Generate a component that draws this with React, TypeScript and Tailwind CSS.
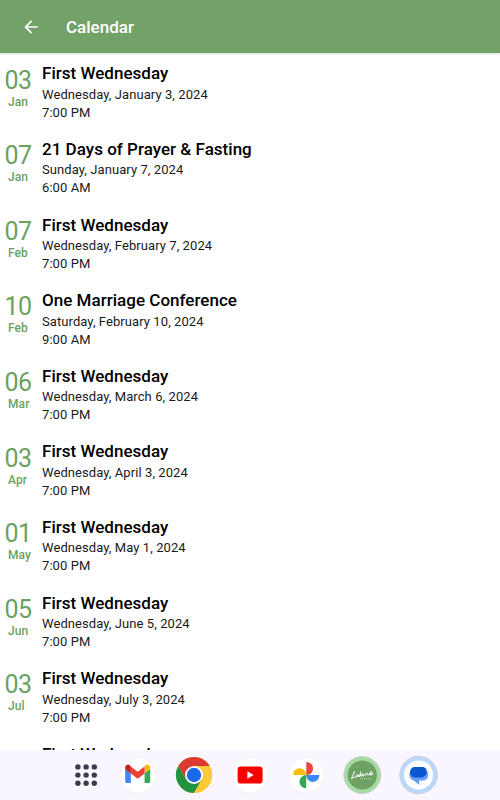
import type { ReactNode } from "react";

const events = [
    { day: "03", month: "Jan", title: "First Wednesday", date: "Wednesday, January 3, 2024", time: "7:00 PM" },
    { day: "07", month: "Jan", title: "21 Days of Prayer & Fasting", date: "Sunday, January 7, 2024", time: "6:00 AM" },
    { day: "07", month: "Feb", title: "First Wednesday", date: "Wednesday, February 7, 2024", time: "7:00 PM" },
    { day: "10", month: "Feb", title: "One Marriage Conference", date: "Saturday, February 10, 2024", time: "9:00 AM" },
    { day: "06", month: "Mar", title: "First Wednesday", date: "Wednesday, March 6, 2024", time: "7:00 PM" },
    { day: "03", month: "Apr", title: "First Wednesday", date: "Wednesday, April 3, 2024", time: "7:00 PM" },
    { day: "01", month: "May", title: "First Wednesday", date: "Wednesday, May 1, 2024", time: "7:00 PM" },
    { day: "05", month: "Jun", title: "First Wednesday", date: "Wednesday, June 5, 2024", time: "7:00 PM" },
    { day: "03", month: "Jul", title: "First Wednesday", date: "Wednesday, July 3, 2024", time: "7:00 PM" },
];

const EventRow = ({ event }: { event: (typeof events)[number] }) => (
    <li className="flex h-[75.6px] shrink-0 pt-[10.4px]">
        <div className="flex w-[42px] shrink-0 flex-col pl-[4.5px] text-[#6aa25f]">
            <span className="pt-[2.2px] text-[25px] leading-[30px] font-normal tracking-[-0.6px]">{event.day}</span>
            <span className="pl-[3.5px] text-xs leading-[13px] font-medium tracking-[0.1px]">{event.month}</span>
        </div>
        <div className="whitespace-nowrap text-black">
            <h2 className="text-[17px] leading-5 font-medium tracking-[0.02px]">{event.title}</h2>
            <p className="pt-[0.4px] text-[13px] leading-[21px] tracking-[0.08px] text-[#1a1a1a]">{event.date}</p>
            <p className="text-[13px] leading-[15px] tracking-[0.08px] text-[#1a1a1a]">{event.time}</p>
        </div>
    </li>
);

const AppIcon = ({ label, children }: { label: string; children: ReactNode }) => (
    <button aria-label={label} className="size-10">
        <svg viewBox="0 0 40 40" className="size-10">
            {children}
        </svg>
    </button>
);

const Disc = () => <circle cx="20" cy="20" r="18" fill="#fff" stroke="#f0eef5" strokeWidth="0.8" />;

const Dock = () => (
    <nav className="flex h-[50px] shrink-0 items-center bg-[#f9f6ff] pl-[66px]">
        <AppIcon label="All apps">
            {[11.9, 20.1, 28.3].map(y =>
                [11.9, 20.1, 28.3].map(x => <circle key={`${x}-${y}`} cx={x} cy={y} r="2.7" fill="#393d4b" />)
            )}
        </AppIcon>
        <div className="ml-[11.7px] flex gap-4">
            <AppIcon label="Gmail">
                <Disc />
                <path d="M7.2 14v12.2c0 1 .8 1.8 1.8 1.8h3.8V18.3z" fill="#4285f4" />
                <path d="M26.6 28h3.8c1 0 1.8-.8 1.8-1.8V14l-5.6 4.3z" fill="#34a853" />
                <path d="M26.6 11.7v6.8l5.6-4.2v-2c0-2.4-2.7-3.6-4.5-2.2z" fill="#fbbc04" />
                <path d="M12.8 18.5v-7l6.9 5.2 6.9-5.2v7l-6.9 5.2z" fill="#ea4335" />
                <path d="M7.2 12.3v2l5.6 4.2v-6.8l-1.1-1.6c-1.8-1.4-4.5-.2-4.5 2.2z" fill="#c5221f" />
            </AppIcon>
            <AppIcon label="Chrome">
                <circle cx="20" cy="20" r="18" fill="#fbc934" />
                <path d="M4.4 11A18 18 0 0 1 35.6 11H20L12.2 24.5z" fill="#dc3a2e" />
                <path d="M4.4 11A18 18 0 0 0 20 38L27.8 24.5 20 20 12.2 24.5z" fill="#229342" />
                <path d="M20 11H35.6A18 18 0 0 1 20 38L27.8 24.5z" fill="#fbc934" />
                <circle cx="20" cy="20" r="9" fill="#fff" />
                <circle cx="20" cy="20" r="7.2" fill="#1a6ae5" />
            </AppIcon>
            <AppIcon label="YouTube">
                <Disc />
                <rect x="7.6" y="11.4" width="25" height="17.2" rx="3.4" fill="#fa0000" />
                <path d="M17.4 16.3v7.4l6.3-3.7z" fill="#fff" />
            </AppIcon>
            <AppIcon label="Photos">
                <Disc />
                <path d="M20.3 6.9a6.8 6.6 0 0 1 0 13.2z" fill="#e8453c" />
                <path d="M33.4 20.1a6.6 6.8 0 0 1-13.2 0z" fill="#4285f4" />
                <path d="M20.2 33.3a6.8 6.6 0 0 1 0-13.2z" fill="#34a853" />
                <path d="M7 20.1a6.6 6.8 0 0 1 13.2 0z" fill="#fbbc04" />
            </AppIcon>
            <AppIcon label="Lakeside Church">
                <circle cx="20.3" cy="20" r="18.5" fill="#a5dba0" stroke="#c7cfd0" strokeWidth="1" />
                <circle cx="20.3" cy="20" r="14.6" fill="#6da263" />
                <g fill="none" stroke="#fff" strokeWidth="1" strokeLinecap="round" strokeLinejoin="round">
                    <path d="M12.6 16.4c-1.1 2.2-2 5.2-3.2 7.1 1.7-1.2 3.3-1 5.4-2" />
                    <path d="M15.8 19.8c-1.6-.3-2.3 2-1 2 1 0 1.4-1.3 1.5-2-.2 1-.2 1.8.5 1.7M18.7 16.9l-1.2 4.6M20 19.1l-2 1.2 1.6 1M20.4 20.4c2-.3 1.6-1.7.6-1.2-1.3.7-.8 2.2.8 1.6M24 18.4c-1.5.1-.3 1.2-.6 1.8M25.4 18.4l-.4 1.7M28 18.4c-1.6-.2-2 1.7-.8 1.7 1 0 1.8-2.6 2-3.8-.5 1.7-.9 2.8-.5 3.8M29.6 19.2c1.6-.3 1.5-1.3.7-1-.9.4-.5 1.9.7 1.3" />
                </g>
                <path d="M18.2 23.7h12" stroke="#dcebd8" strokeWidth="0.8" strokeDasharray="1 0.9" />
            </AppIcon>
            <AppIcon label="Messages">
                <circle cx="20.6" cy="20" r="18.8" fill="#bbd7fb" stroke="#ced0da" strokeWidth="1" />
                <circle cx="20.6" cy="20" r="14.5" fill="#fff" />
                <path d="M16.5 14.5h8.5c3.2 0 5.2 2.1 5.2 5.3 0 3.4-2.3 5.7-4.8 5.7h-4.2v4.5l-5.4-4.5c-2.9-.5-4.5-2.8-4.5-5.7 0-3 2-5.3 5.2-5.3z" fill="#669df6" />
                <path d="M16.9 12h7.5c2.7 0 4.4 2 4.4 4.6 0 3.2-2.1 5.8-5.1 5.8h-6.4c-3 0-5.2-2.4-5.2-5.5 0-2.8 2.1-4.9 4.8-4.9z" fill="#0b57d0" />
            </AppIcon>
        </div>
    </nav>
);

const App = () => {
    return (
        <div className="flex h-screen w-full flex-col overflow-hidden bg-white font-['Roboto',sans-serif]">
            <header className="z-10 flex h-[53px] shrink-0 items-center bg-[#72a267] pt-px text-white shadow-[0_1px_2px_rgba(0,0,0,0.15)]">
                <button aria-label="Back" className="ml-[20.5px] size-5">
                    <svg viewBox="0 0 24 24" className="size-5" fill="currentColor">
                        <path d="M20 11H7.83l5.59-5.59L12 4l-8 8 8 8 1.41-1.41L7.83 13H20z" />
                    </svg>
                </button>
                <h1 className="ml-[25.5px] text-[17px] leading-5 font-medium">Calendar</h1>
            </header>
            <ul className="flex min-h-0 flex-1 flex-col overflow-hidden">
                {events.map(event => (
                    <EventRow key={event.date} event={event} />
                ))}
                {/* next row, only its title peeks above the dock */}
                <li className="shrink-0 pt-[10.4px] pl-[42px]">
                    <h2 className="text-[17px] leading-5 font-medium">First Wednesday</h2>
                </li>
            </ul>
            <Dock />
        </div>
    );
};

export default App;
